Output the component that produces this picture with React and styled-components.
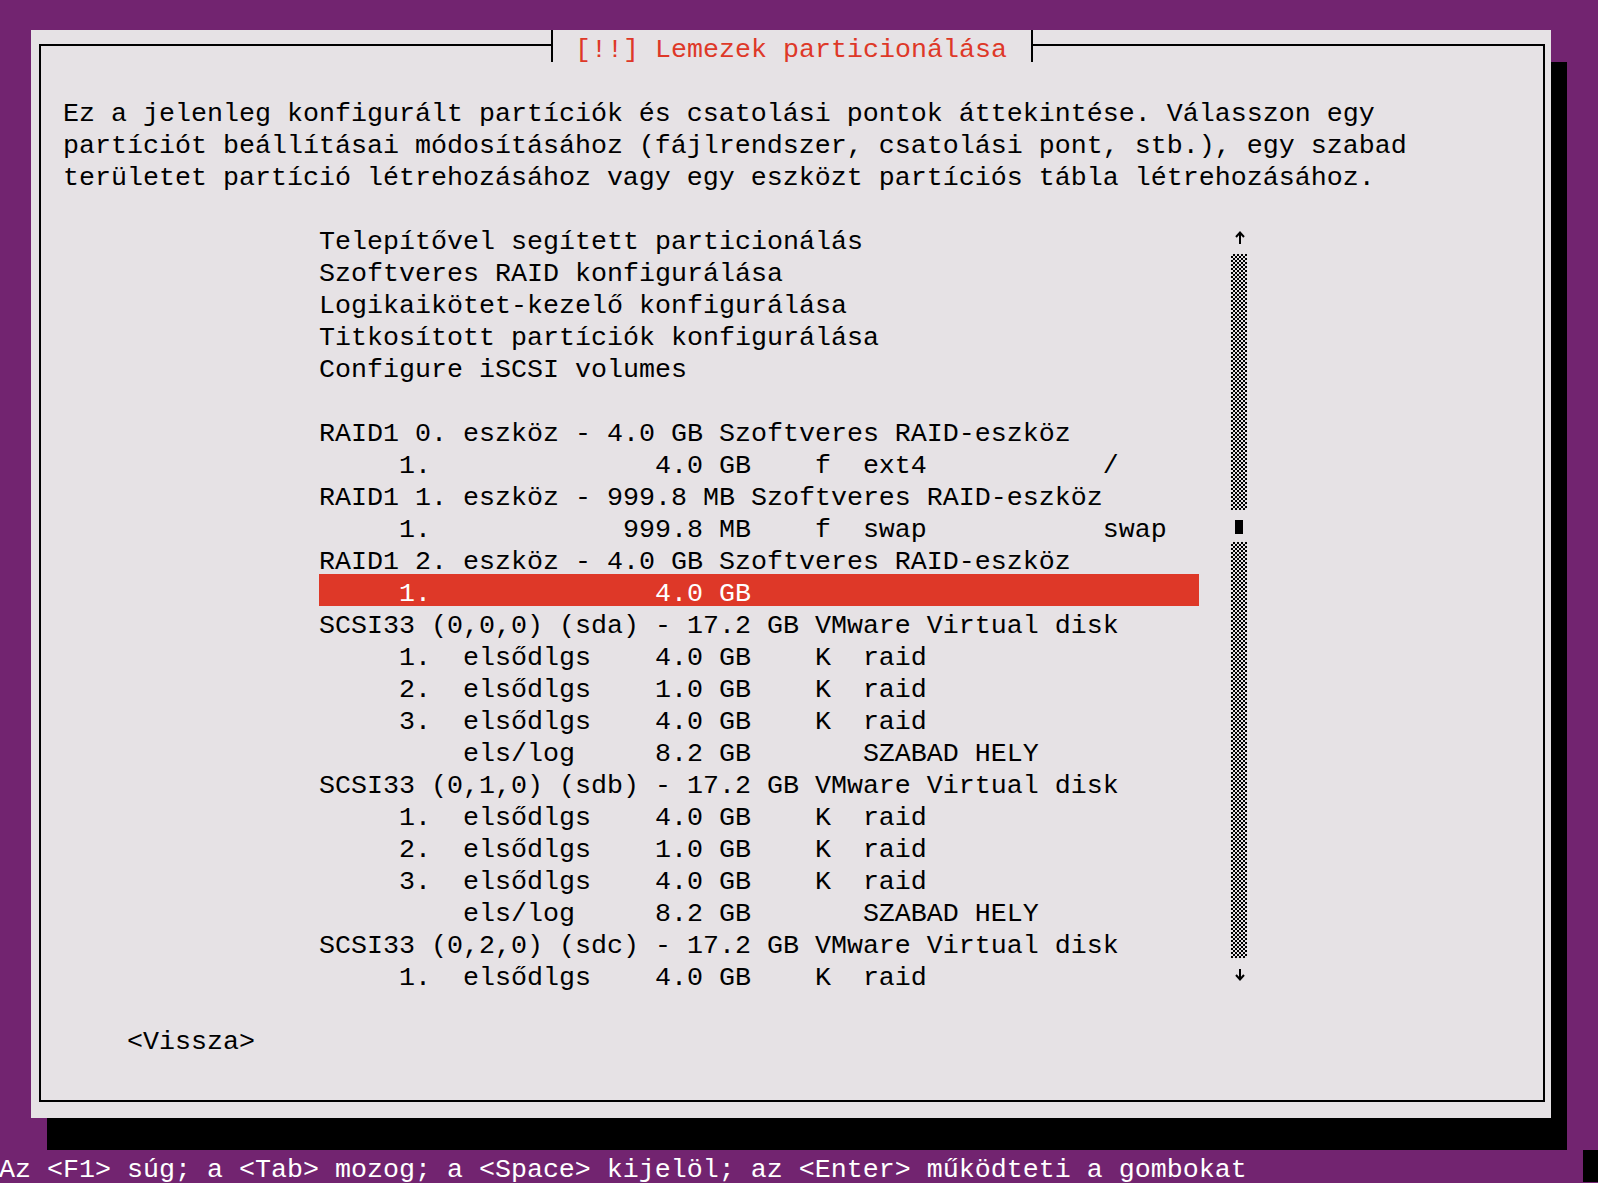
import React from "react";
import styled, { createGlobalStyle } from "styled-components";

const PURPLE = "#722470";
const PAPER = "#e6e2e5";
const RED = "#de3828";

const Global = createGlobalStyle`
  html, body {
    margin: 0;
    padding: 0;
    background: ${PURPLE};
    overflow: hidden;
  }
`;

const Screen = styled.div`
  width: 1600px;
  margin: -2px 0 0 -1px;
  display: flex;
  flex-direction: column;
  font-family: "Liberation Mono", "DejaVu Sans Mono", monospace;
  font-size: 26.67px;
  color: #000;
`;

const Spacer = styled.div`
  height: ${(p) => p.$rows * 32}px;
  flex: none;
`;

const DialogRow = styled.div`
  display: flex;
  padding-left: 32px;
`;

const Dialog = styled.div`
  width: 1520px;
  height: 1088px;
  box-sizing: border-box;
  padding: 14px 6px 16px 8px;
  background: ${PAPER};
  flex: none;
`;

const ShadowSide = styled.div`
  width: 16px;
  height: 1056px;
  margin-top: 32px;
  background: #000;
  flex: none;
`;

const ShadowBottom = styled.div`
  width: 1520px;
  height: 32px;
  margin-left: 48px;
  background: #000;
`;

const Frame = styled.div`
  position: relative;
  height: 100%;
  box-sizing: border-box;
  border: 2px solid #000;
  padding-top: 16px;
  display: flex;
  flex-direction: column;
`;

const Title = styled.div`
  position: absolute;
  top: -16px;
  left: 510px;
  width: 482px;
  height: 32px;
  box-sizing: border-box;
  border-left: 2px solid #000;
  border-right: 2px solid #000;
  background: ${PAPER};
  padding: 3.5px 0 0 22px;
  line-height: 32px;
  color: ${RED};
  white-space: pre;
`;

const Line = styled.div`
  height: 32px;
  box-sizing: border-box;
  padding-top: 3.5px;
  line-height: 32px;
  white-space: pre;
  background: ${(p) => (p.$selected ? RED : "transparent")};
  color: ${(p) => (p.$selected ? "#fff" : "inherit")};
`;

const Intro = styled.div`
  padding-left: 22px;
`;

const ListArea = styled.div`
  display: flex;
  gap: 32px;
  padding-left: 278px;
`;

const List = styled.div`
  width: 880px;
  display: flex;
  flex-direction: column;
`;

const ScrollBar = styled.div`
  width: 16px;
  display: flex;
  flex-direction: column;
`;

const ArrowCell = styled.div`
  height: 32px;
  display: flex;
`;

const Track = styled.div`
  height: ${(p) => p.$rows * 32}px;
  background-color: ${PAPER};
  background-image: conic-gradient(#000 25%, transparent 0 50%, #000 0 75%, transparent 0);
  background-size: 4px 4px;
`;

const ThumbCell = styled.div`
  height: 32px;
  box-sizing: border-box;
  padding: 10px 4px 8px 4px;
`;

const Thumb = styled.div`
  width: 8px;
  height: 14px;
  background: #000;
`;

const ButtonRow = styled.div`
  padding-left: 86px;
`;

const StatusBar = styled.div`
  display: flex;
  justify-content: space-between;
  color: #fff;
`;

const Cursor = styled.div`
  width: 16px;
  height: 32px;
  background: #000;
`;

const UpArrow = () => (
  <svg width="16" height="32" viewBox="0 0 16 32">
    <rect x="8" y="10" width="2" height="12" fill="#000" />
    <path d="M5 15 L9 10.5 L13 15" stroke="#000" strokeWidth="2" fill="none" />
  </svg>
);

const DownArrow = () => (
  <svg width="16" height="32" viewBox="0 0 16 32">
    <rect x="8" y="11" width="2" height="11" fill="#000" />
    <path d="M5 17 L9 21.5 L13 17" stroke="#000" strokeWidth="2" fill="none" />
  </svg>
);

const intro = [
  "Ez a jelenleg konfigurált partíciók és csatolási pontok áttekintése. Válasszon egy",
  "partíciót beállításai módosításához (fájlrendszer, csatolási pont, stb.), egy szabad",
  "területet partíció létrehozásához vagy egy eszközt partíciós tábla létrehozásához.",
];

const part = (n, type, size, flag, fs, mnt = "") => {
  const num = n ? `${n}.` : "  ";
  const left = `     ${num}  ${type}`.padEnd(19, " ");
  let row = left + size.padStart(8, " ");
  if (flag || fs) row += "    " + flag.padEnd(3, " ") + fs;
  if (mnt) row = row.padEnd(49, " ") + mnt;
  return row;
};

const items = [
  { t: "Telepítővel segített particionálás" },
  { t: "Szoftveres RAID konfigurálása" },
  { t: "Logikaikötet-kezelő konfigurálása" },
  { t: "Titkosított partíciók konfigurálása" },
  { t: "Configure iSCSI volumes" },
  { t: "" },
  { t: "RAID1 0. eszköz - 4.0 GB Szoftveres RAID-eszköz" },
  { t: part("1", "", "4.0 GB", "f", "ext4", "/") },
  { t: "RAID1 1. eszköz - 999.8 MB Szoftveres RAID-eszköz" },
  { t: part("1", "", "999.8 MB", "f", "swap", "swap") },
  { t: "RAID1 2. eszköz - 4.0 GB Szoftveres RAID-eszköz" },
  { t: part("1", "", "4.0 GB", "", ""), selected: true },
  { t: "SCSI33 (0,0,0) (sda) - 17.2 GB VMware Virtual disk" },
  { t: part("1", "elsődlgs", "4.0 GB", "K", "raid") },
  { t: part("2", "elsődlgs", "1.0 GB", "K", "raid") },
  { t: part("3", "elsődlgs", "4.0 GB", "K", "raid") },
  { t: part("", "els/log", "8.2 GB", " ", "SZABAD HELY") },
  { t: "SCSI33 (0,1,0) (sdb) - 17.2 GB VMware Virtual disk" },
  { t: part("1", "elsődlgs", "4.0 GB", "K", "raid") },
  { t: part("2", "elsődlgs", "1.0 GB", "K", "raid") },
  { t: part("3", "elsődlgs", "4.0 GB", "K", "raid") },
  { t: part("", "els/log", "8.2 GB", " ", "SZABAD HELY") },
  { t: "SCSI33 (0,2,0) (sdc) - 17.2 GB VMware Virtual disk" },
  { t: part("1", "elsődlgs", "4.0 GB", "K", "raid") },
];

export default function App() {
  return (
    <>
      <Global />
      <Screen>
        <Spacer $rows={1} />
        <DialogRow>
          <Dialog>
            <Frame>
              <Title>[!!] Lemezek particionálása</Title>
              <Spacer $rows={1} />
              <Intro>
                {intro.map((l, i) => (
                  <Line key={i}>{l}</Line>
                ))}
              </Intro>
              <Spacer $rows={1} />
              <ListArea>
                <List>
                  {items.map((it, i) => (
                    <Line key={i} $selected={it.selected}>
                      {it.t}
                    </Line>
                  ))}
                </List>
                <ScrollBar>
                  <ArrowCell>
                    <UpArrow />
                  </ArrowCell>
                  <Track $rows={8} />
                  <ThumbCell>
                    <Thumb />
                  </ThumbCell>
                  <Track $rows={13} />
                  <ArrowCell>
                    <DownArrow />
                  </ArrowCell>
                </ScrollBar>
              </ListArea>
              <Spacer $rows={1} />
              <ButtonRow>
                <Line>&lt;Vissza&gt;</Line>
              </ButtonRow>
            </Frame>
          </Dialog>
          <ShadowSide />
        </DialogRow>
        <ShadowBottom />
        <StatusBar>
          <Line>Az &lt;F1&gt; súg; a &lt;Tab&gt; mozog; a &lt;Space&gt; kijelöl; az &lt;Enter&gt; működteti a gombokat</Line>
          <Cursor />
        </StatusBar>
      </Screen>
    </>
  );
}
